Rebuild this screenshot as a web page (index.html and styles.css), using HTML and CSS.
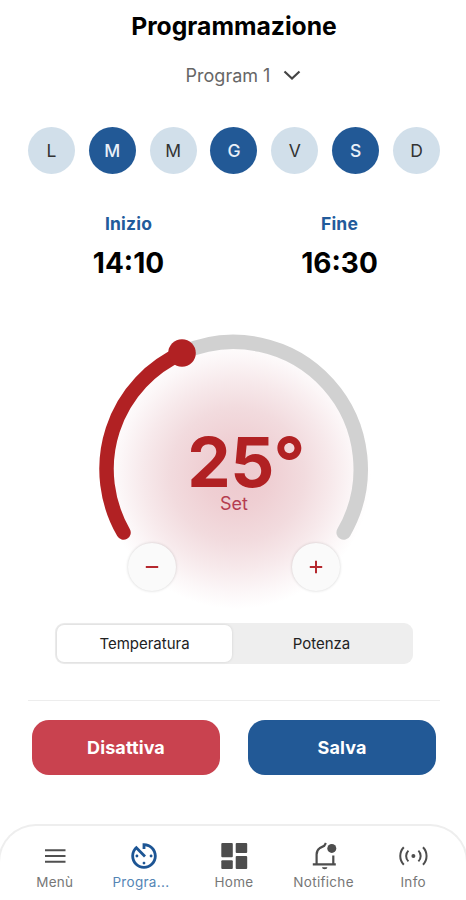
FILE: index.html
```html
<!DOCTYPE html>
<html lang="it">
<head>
<meta charset="utf-8">
<meta name="viewport" content="width=device-width, initial-scale=1">
<title>Programmazione</title>
<link rel="stylesheet" href="styles.css">
</head>
<body>
<div class="app">
  <header>
    <h1 class="title">Programmazione</h1>
    <div class="program">
      <span>Program 1</span>
      <svg width="18" height="12" viewBox="0 0 18 12"><path d="M1.5 2.5 9 9.5 16.5 2.5" fill="none" stroke="#444" stroke-width="2.2"/></svg>
    </div>
  </header>
  <div class="days">
    <span class="day">L</span>
    <span class="day on">M</span>
    <span class="day">M</span>
    <span class="day on">G</span>
    <span class="day">V</span>
    <span class="day on">S</span>
    <span class="day">D</span>
  </div>
  <div class="times">
    <div class="time"><span class="label">Inizio</span><span class="value">14:10</span></div>
    <div class="time"><span class="label">Fine</span><span class="value">16:30</span></div>
  </div>
  <section class="dial">
    <svg class="arc" width="300" height="290" viewBox="80 320 300 290">
      <defs>
        <radialGradient id="glow">
          <stop offset="0" stop-color="#edc9ce"/>
          <stop offset=".25" stop-color="#efcfd3"/>
          <stop offset=".5" stop-color="#f2dbde"/>
          <stop offset=".7" stop-color="#f7e9eb"/>
          <stop offset=".88" stop-color="#fcf7f8"/>
          <stop offset="1" stop-color="#fff"/>
        </radialGradient>
      </defs>
      <circle cx="237" cy="475" r="134" fill="url(#glow)"/>
      <g fill="none" stroke-width="14.5" stroke-linecap="round">
        <path d="M182 353A127 127 0 0 1 343.7 532.5" stroke="#d1d1d1"/>
        <path d="M123.5 532.5A127 127 0 0 1 182 353" stroke="#b12123"/>
      </g>
      <circle cx="182" cy="353" r="13.8" fill="#b12123"/>
    </svg>
    <div class="reading">
      <span class="degrees">25°</span>
      <span class="set">Set</span>
    </div>
    <div class="steps">
      <button class="step" aria-label="Diminuisci"><svg width="16" height="16" viewBox="0 0 16 16"><path d="M1.8 8H14.2" stroke="#b5282e" stroke-width="2"/></svg></button>
      <button class="step" aria-label="Aumenta"><svg width="16" height="16" viewBox="0 0 16 16"><path d="M1.8 8H14.2M8 1.8V14.2" stroke="#b5282e" stroke-width="2"/></svg></button>
    </div>
  </section>
  <div class="segment">
    <button class="choice selected">Temperatura</button>
    <button class="choice">Potenza</button>
  </div>
  <div class="actions">
    <button class="action off">Disattiva</button>
    <button class="action save">Salva</button>
  </div>
  <nav class="nav">
    <a class="item">
      <svg width="34" height="34" viewBox="0 0 34 34"><path d="M7 11.3H27.5M7 17H27.5M7 22.7H27.5" stroke="#505050" stroke-width="2"/></svg>
      <span>Menù</span>
    </a>
    <a class="item current">
      <svg width="34" height="34" viewBox="0 0 24 24"><path fill="#1d5594" d="M11 17c0 .55.45 1 1 1s1-.45 1-1-.45-1-1-1-1 .45-1 1zm0-14v4h2V5.08c3.39.49 6 3.39 6 6.92 0 3.87-3.13 7-7 7s-7-3.13-7-7c0-1.68.59-3.22 1.58-4.42L12 13l1.41-1.41-6.8-6.8v.02C4.42 6.45 3 9.05 3 12c0 4.97 4.02 9 9 9 4.97 0 9-4.03 9-9s-4.03-9-9-9h-1zm7 9c0-.55-.45-1-1-1s-1 .45-1 1 .45 1 1 1 1-.45 1-1zM6 12c0 .55.45 1 1 1s1-.45 1-1-.45-1-1-1-1 .45-1 1z"/></svg>
      <span class="short">Progra...</span>
    </a>
    <a class="item">
      <svg width="34" height="34" viewBox="0 0 34 34" fill="#4d4d4d"><rect x="4.3" y="4" width="11.5" height="14.2" rx="1"/><rect x="18.7" y="4" width="11.5" height="10" rx="1"/><rect x="4.3" y="21.3" width="11.5" height="8.6" rx="1"/><rect x="18.7" y="17" width="11.5" height="12.9" rx="1"/></svg>
      <span>Home</span>
    </a>
    <a class="item">
      <svg width="34" height="34" viewBox="0 0 34 34"><path d="M18.9 4L17.2 6.8 12.5 9.3Q9.6 11.2 9.6 15.5V25M26.3 16.5V25M5.8 25.4H28.8" fill="none" stroke="#4d4d4d" stroke-width="2.2"/><circle cx="24.8" cy="9.4" r="4.5" fill="#4d4d4d"/><path d="M15 28.3H20.4A2.7 2 0 0 1 15 28.3Z" fill="#4d4d4d"/></svg>
      <span>Notifiche</span>
    </a>
    <a class="item">
      <svg width="34" height="34" viewBox="0 0 34 34"><g fill="none" stroke="#4d4d4d" stroke-width="2"><path d="M7.8 8.2A12.7 12.7 0 0 0 7.8 25.8M12.4 11.6A7.6 7.6 0 0 0 12.4 22.4M22.4 11.6A7.6 7.6 0 0 1 22.4 22.4M27 8.2A12.7 12.7 0 0 1 27 25.8"/></g><circle cx="17.4" cy="17" r="2" fill="#4d4d4d"/></svg>
      <span>Info</span>
    </a>
  </nav>
</div>
</body>
</html>
```
FILE: styles.css
```css
* { box-sizing: border-box; }
body { margin: 0; background: #fff; font-family: Inter, "Liberation Sans", sans-serif; color: #111; }
button { font: inherit; border: 0; padding: 0; margin: 0; }
svg { display: block; flex: none; }
.app { width: 466px; height: 900px; display: flex; flex-direction: column; overflow: hidden; }
.title { margin: 11px 0 0; padding-left: 2px; font-size: 24.7px; line-height: 30px; font-weight: 700; text-align: center; color: #000; }
.program { display: flex; align-items: center; justify-content: center; gap: 13px; height: 24px; margin-top: 22px; padding-left: 21px; font-size: 18px; color: #666; }
.days { display: flex; justify-content: space-between; margin: 40px 26px 0 28px; }
.day { width: 47px; height: 47px; border-radius: 50%; background: #d1dfea; color: #333; font-size: 17.5px; line-height: 47px; text-align: center; }
.day.on { background: #225996; color: #e9f0f8; font-weight: 500; }
.times { display: grid; grid-template-columns: 1fr 1fr; margin: 38px 21px 0 23px; height: 76px; }
.time { display: flex; flex-direction: column; align-items: center; }
.label { font-size: 17.5px; line-height: 24px; font-weight: 700; letter-spacing: .2px; color: #225b9b; }
.value { margin-top: 10px; font-size: 28px; line-height: 34px; font-weight: 700; color: #000; }
.dial { display: grid; width: 300px; height: 290px; margin: 32px 0 0 80px; }
.dial > * { grid-area: 1 / 1; }
.reading { display: flex; flex-direction: column; align-items: center; padding: 115px 0 0 14px; z-index: 1; }
.degrees { font-size: 69px; line-height: 54px; font-weight: 700; padding-left: 18px; letter-spacing: -.5px; color: #b12123; }
.set { margin-top: 5px; font-size: 18px; line-height: 20px; color: #b53d50; padding-right: 6px; }
.steps { align-self: end; display: flex; justify-content: space-between; margin: 0 40px 19px 48px; z-index: 1; }
.step { display: grid; place-items: center; width: 48px; height: 48px; border-radius: 50%; background: #fafafa; box-shadow: 0 0 3px rgba(0, 0, 0, .18); }
.segment { display: grid; grid-template-columns: 175px 1fr; width: 358px; height: 41px; margin: 13px 0 0 55px; padding: 2px; border-radius: 9px; background: #eee; }
.choice { background: none; border-radius: 7px; font-size: 15px; color: #222; }
.choice.selected { background: #fff; box-shadow: 0 0 3px rgba(0, 0, 0, .12); }
.actions { display: flex; gap: 28px; margin: 36px 26px 0 28px; padding: 19px 4px 0; border-top: 1px solid #ededed; }
.action { flex: 1; height: 55px; border-radius: 17px; color: #fff; font-size: 18px; font-weight: 700; letter-spacing: .1px; }
.off { background: #c9424f; }
.save { background: #225996; }
.nav { display: grid; grid-template-columns: repeat(5, 1fr); height: 82px; margin: auto -2px -6px; padding: 13px 8px 0 10px; border: 2px solid #eee; border-bottom: 0; border-radius: 38px 38px 0 0; flex: none; }
.item { display: flex; flex-direction: column; align-items: center; font-size: 13.5px; line-height: 18px; letter-spacing: .3px; color: #777; }
.item.current { color: #5485b5; }
.short { margin-right: 7px; }
```
